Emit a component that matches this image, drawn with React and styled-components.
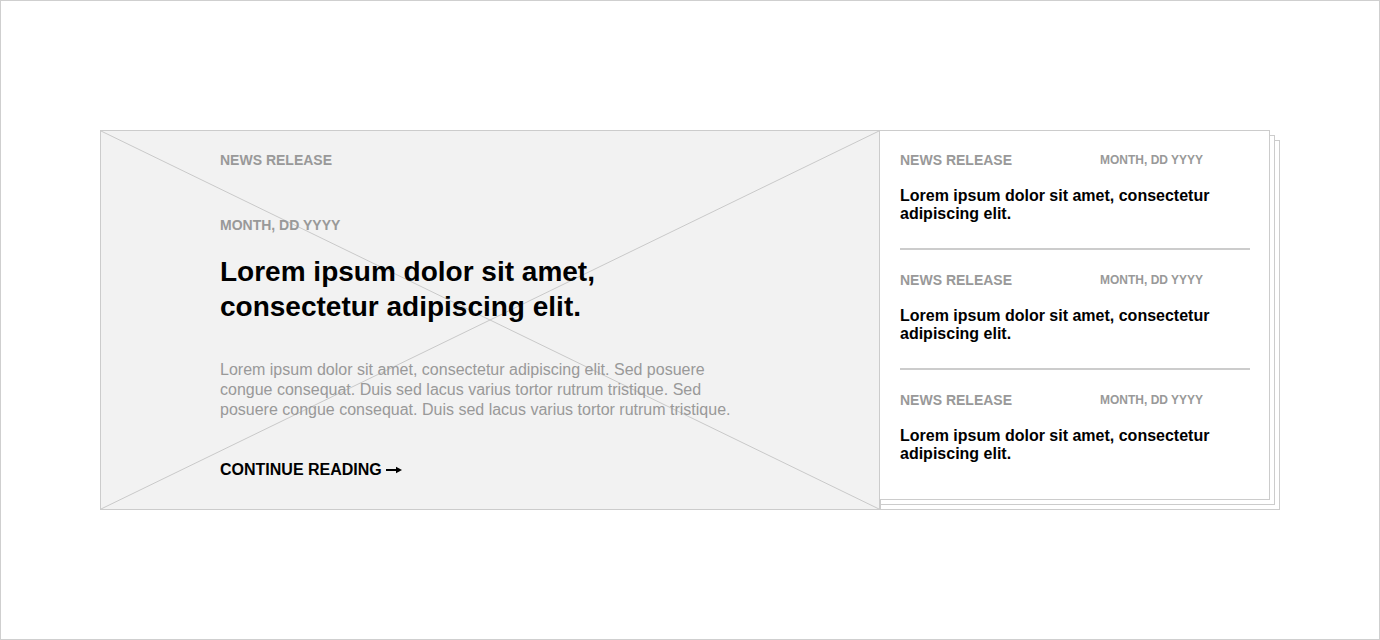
import React from 'react';
import styled, { createGlobalStyle } from 'styled-components';

const GlobalStyle = createGlobalStyle`
  html, body {
    margin: 0;
    padding: 0;
    background: #fff;
  }
  *, *::before, *::after {
    box-sizing: border-box;
  }
`;

const Frame = styled.div`
  width: 1380px;
  height: 640px;
  border: 1px solid #cfcfcf;
  padding: 129px 0 0 99px;
  font-family: 'Liberation Sans', Arial, sans-serif;
`;

const Row = styled.div`
  display: flex;
  align-items: flex-start;
`;

const Feature = styled.div`
  position: relative;
  width: 780px;
  height: 380px;
  background: #f2f2f2;
  border: 1px solid #cccccc;
  padding: 21px 0 0 119px;
  overflow: hidden;
`;

const Cross = styled.svg`
  position: absolute;
  inset: 0;
  width: 100%;
  height: 100%;
  line {
    stroke: #c9c9c9;
    stroke-width: 1;
  }
`;

const FeatureBody = styled.div`
  position: relative;
  width: 530px;
`;

const Label = styled.div`
  font-size: ${(p) => (p.$small ? '12px' : '14px')};
  line-height: 16px;
  font-weight: 700;
  color: #999999;
  margin-top: ${(p) => p.$top || 0}px;
`;

const Headline = styled.h1`
  margin: 21px 0 0;
  font-size: 28px;
  line-height: 35px;
  font-weight: 700;
  color: #000;
`;

const Summary = styled.p`
  margin: 36px 0 0;
  font-size: 16px;
  line-height: 20px;
  color: #999999;
`;

const ReadMore = styled.a`
  display: inline-flex;
  align-items: center;
  gap: 4px;
  margin-top: 41px;
  font-size: 16px;
  line-height: 18px;
  font-weight: 700;
  color: #000;
  text-decoration: none;
  svg {
    display: block;
  }
`;

const Stack = styled.div`
  position: relative;
  width: 400px;
  height: 380px;
  isolation: isolate;

  &::before,
  &::after {
    content: '';
    position: absolute;
    left: 0;
    height: 370px;
    background: #fff;
    border: 1px solid #cccccc;
  }
  &::before {
    top: 5px;
    width: 395px;
    z-index: 1;
  }
  &::after {
    top: 10px;
    width: 400px;
    z-index: 0;
  }
`;

const Card = styled.div`
  position: relative;
  z-index: 2;
  width: 390px;
  height: 370px;
  background: #fff;
  border: 1px solid #cccccc;
  border-left: none;
  padding: 0 19px 0 20px;
`;

const Item = styled.div`
  padding: 21px 0 ${(p) => (p.$last ? 0 : 25)}px;
  border-bottom: ${(p) => (p.$last ? 'none' : '2px solid #cccccc')};
  & + & {
    padding-top: 22px;
  }
`;

const ItemHead = styled.div`
  display: flex;
  align-items: center;
  height: 16px;
  & > :first-child {
    width: 200px;
  }
`;

const ItemTitle = styled.div`
  margin-top: 19px;
  font-size: 16px;
  line-height: 18px;
  font-weight: 700;
  color: #000;
`;

const Arrow = () => (
  <svg width="16" height="8" viewBox="0 0 16 8">
    <rect x="0" y="3" width="11" height="2" fill="#000" />
    <polygon points="10,0.8 16,4 10,7.2" fill="#000" />
  </svg>
);

const items = [1, 2, 3];

const App = () => {
  return (
    <>
      <GlobalStyle />
      <Frame>
        <Row>
          <Feature>
            <Cross preserveAspectRatio="none" viewBox="0 0 100 100">
              <line x1="0" y1="0" x2="100" y2="100" vectorEffect="non-scaling-stroke" />
              <line x1="100" y1="0" x2="0" y2="100" vectorEffect="non-scaling-stroke" />
            </Cross>
            <FeatureBody>
              <Label>NEWS RELEASE</Label>
              <Label $top={49}>MONTH, DD YYYY</Label>
              <Headline>
                Lorem ipsum dolor sit amet,
                <br />
                consectetur adipiscing elit.
              </Headline>
              <Summary>
                Lorem ipsum dolor sit amet, consectetur adipiscing elit. Sed posuere congue
                consequat. Duis sed lacus varius tortor rutrum tristique. Sed posuere congue
                consequat. Duis sed lacus varius tortor rutrum tristique.
              </Summary>
              <ReadMore href="#">
                CONTINUE READING <Arrow />
              </ReadMore>
            </FeatureBody>
          </Feature>
          <Stack>
            <Card>
              {items.map((n, i) => (
                <Item key={n} $last={i === items.length - 1}>
                  <ItemHead>
                    <Label>NEWS RELEASE</Label>
                    <Label $small>MONTH, DD YYYY</Label>
                  </ItemHead>
                  <ItemTitle>
                    Lorem ipsum dolor sit amet, consectetur adipiscing elit.
                  </ItemTitle>
                </Item>
              ))}
            </Card>
          </Stack>
        </Row>
      </Frame>
    </>
  );
};

export default App;
